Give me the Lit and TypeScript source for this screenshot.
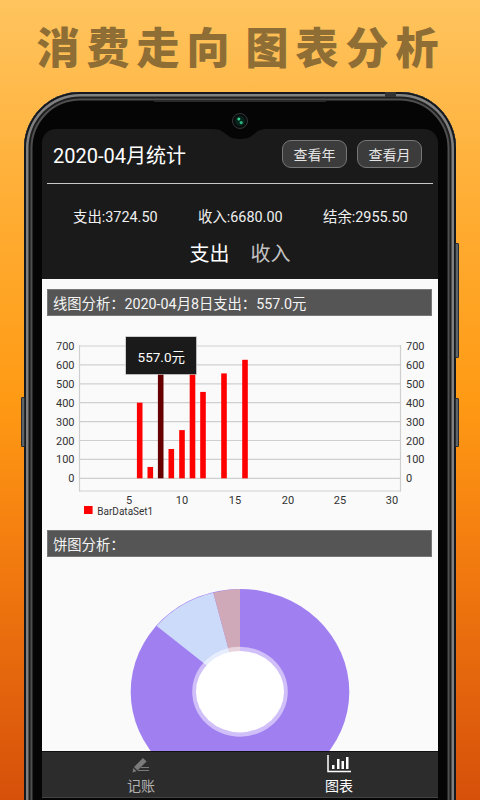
import { LitElement, html, css, svg } from "lit";
import { customElement } from "lit/decorators.js";

const Y0 = 162.3;
const YS = 132.3 / 700;
const bars: [number, number][] = [
  [139.7, 400], [150.3, 60], [160.7, 557], [171.3, 155], [182, 255],
  [192.5, 600], [203, 457], [224, 555], [245, 627],
];

@customElement("app-root")
export class AppRoot extends LitElement {
  static styles = css`
    :host {
      display: flex;
      flex-direction: column;
      align-items: center;
      width: 480px;
      height: 800px;
      overflow: hidden;
      position: relative;
      font-family: Roboto, "Noto Sans CJK SC", sans-serif;
      background: linear-gradient(180deg, #ffc45e 0%, #ffae35 25%, #ff9a14 50%, #f47e10 68%, #d6500a 100%);
    }
    .headline {
      height: 92px;
      flex: none;
      width: 480px;
      display: flex;
      justify-content: center;
      align-items: center;
      gap: 9px;
      padding-left: 2px;
      box-sizing: border-box;
      padding-bottom: 1px;
      color: #8e6e35;
      font-family: "Noto Sans CJK SC", sans-serif;
      font-weight: 900;
      font-size: 43px;
      letter-spacing: 7px;
      line-height: 1;
    }
    .phone {
      flex: none;
      position: relative;
      width: 432px;
      height: 800px;
      box-sizing: border-box;
      padding: 37px 18px 0 18px;
      border-radius: 56px;
      background: #050505;
      box-shadow:
        inset 0 0 0 2px #15191d,
        inset 0 0 0 4.5px #808080,
        inset 0 0 0 6.5px #1e1e1e,
        inset 0 0 0 8.5px #4e4e4e;
    }
    .speaker {
      position: absolute;
      top: 8px;
      left: 129px;
      width: 174px;
      height: 2px;
      background: #2a2a2a;
      border-radius: 0 0 3px 3px;
    }
    .antenna {
      position: absolute;
      top: 0;
      left: 361px;
      width: 11px;
      height: 5px;
      background: #333;
    }
    .cam {
      position: absolute;
      top: 21px;
      left: 208px;
      z-index: 2;
      display: block;
    }
    .notch {
      position: absolute;
      top: 37px;
      left: 189px;
      z-index: 1;
      display: block;
    }
    .screen {
      width: 396px;
      height: 669px;
      border-radius: 14px 14px 0 0;
      overflow: hidden;
      display: flex;
      flex-direction: column;
      background: #1a1a1a;
    }
    .top { height: 150px; flex: none; display: flex; flex-direction: column; color: #fff; }
    .titlebar {
      height: 50px;
      margin-bottom: 4px;
      flex: none;
      display: flex;
      align-items: center;
      padding: 0 16px 0 11px;
      box-sizing: border-box;
      gap: 10px;
      font-size: 20px;
    }
    .titlebar .t { flex: 1; }
    .btn {
      width: 65px;
      height: 28px;
      box-sizing: border-box;
      display: flex;
      align-items: center;
      justify-content: center;
      border: 1px solid #777;
      border-radius: 9px;
      background: #3c3c3c;
      color: #e4e4e4;
      font-size: 14px;
    }
    .rule { height: 1px; background: #c8c8c8; margin: 0 5px; flex: none; }
    .stats {
      display: grid;
      grid-template-columns: repeat(3, 125px);
      padding-left: 31px;
      margin-top: 25px;
      font-size: 14.4px;
      line-height: 18px;
      color: #f0f0f0;
    }
    .tabs {
      display: flex;
      justify-content: center;
      gap: 21px;
      margin-top: 14px;
      font-size: 20px;
      line-height: 26px;
      color: #c4c4c4;
    }
    .tabs .on { color: #fff; }
    .body { flex: 1; min-height: 0; background: #fafafa; overflow: hidden; padding: 10px 6px 0 5px; display: flex; flex-direction: column; }
    .sect {
      height: 27px;
      flex: none;
      box-sizing: border-box;
      border: 1px solid #777;
      background: #555;
      color: #f4f4f4;
      font-size: 14.3px;
      display: flex;
      align-items: center;
      padding-left: 5px;
    }
    .chart { display: block; flex: none; margin: 0 -6px 0 -5px; }
    .chart text { font-family: Roboto, "Noto Sans CJK SC", sans-serif; font-size: 11px; fill: #333; }
    .chart .legend { font-size: 10px; }
    .chart .tip { font-size: 13.5px; fill: #fff; }
    .pie { display: block; flex: none; margin: 0 -6px 0 -5px; }
    .nav {
      height: 45px;
      flex: none;
      display: flex;
      background: #2c2c2c;
      border-top: 1px solid #111;
      border-bottom: 1px solid #444;
    }
    .nav div {
      flex: 1;
      display: flex;
      flex-direction: column;
      align-items: center;
      font-size: 14px;
      line-height: 16px;
      color: #b0b0b0;
      padding-top: 3px;
    }
    .nav svg { display: block; margin-bottom: 1px; }
    .nav .on { color: #fff; }
    .key { position: absolute; width: 4px; background: #5e6468; border-radius: 1px; border: 1px solid #2a2e31; box-sizing: border-box; }
    .kr1 { right: -3px; top: 151px; height: 115px; }
    .kr2 { right: -3px; top: 306px; height: 49px; }
    .kl { left: -3px; top: 305px; height: 50px; }
  `;

  private barChart() {
    const grid = [0, 100, 200, 300, 400, 500, 600, 700];
    return html`<svg class="chart" width="396" height="214" viewBox="0 0 396 214">
      ${grid.map((v) => {
        const y = Y0 - v * YS;
        return svg`<line x1="37.5" x2="358.5" y1=${y} y2=${y} stroke="#cfcfcf" stroke-width="1.2"></line>
          <text x="32.5" y=${y + 4} text-anchor="end">${v}</text>
          <text x="364" y=${y + 4}>${v}</text>`;
      })}
      <line x1="37.5" x2="37.5" y1="29" y2="175.5" stroke="#cfcfcf" stroke-width="1.2"></line>
      <line x1="358.5" x2="358.5" y1="29" y2="175.5" stroke="#cfcfcf" stroke-width="1.2"></line>
      <line x1="37" x2="359" y1="175" y2="175" stroke="#cfcfcf" stroke-width="1.2"></line>
      ${bars.map(([x, v]) => svg`<rect x=${x - 42 - 2.8} y=${Y0 - v * YS} width="5.6" height=${v * YS} fill=${v === 557 ? "#660000" : "#ff0000"}></rect>`)}
      ${[[87, "5"], [140, "10"], [193, "15"], [246, "20"], [298, "25"], [350, "30"]].map(
        ([x, t]) => svg`<text x=${x} y="188" text-anchor="middle">${t}</text>`
      )}
      <rect x="42" y="190" width="8.6" height="8" fill="#ff0000"></rect>
      <text class="legend" x="55.3" y="198.5">BarDataSet1</text>
      <rect x="83.7" y="20.7" width="70.8" height="37.8" fill="#1a1a1a" stroke="#ddd" stroke-width="0.6"></rect>
      <text class="tip" x="119.3" y="45.5" text-anchor="middle">557.0元</text>
    </svg>`;
  }

  private pieChart() {
    const cx = 198, cy = 134.7, rx = 109.3, ry = 102.7;
    const top = `${cx} ${cy - ry}`;
    const a = `171.3 35.7`;
    const b = `114.7 69`;
    return html`<svg class="pie" width="396" height="196" viewBox="0 0 396 196">
      <ellipse cx=${cx} cy=${cy} rx=${rx} ry=${ry} fill="#a07ff0"></ellipse>
      <path d="M${cx} ${cy} L${a} A${rx} ${ry} 0 0 0 ${b} Z" fill="#cddbfb"></path>
      <path d="M${cx} ${cy} L${top} A${rx} ${ry} 0 0 0 ${a} Z" fill="#d0a9b8"></path>
      <ellipse cx=${cx} cy=${cy} rx="47.8" ry="45" fill="#ffffff" fill-opacity="0.5"></ellipse>
      <ellipse cx=${cx} cy=${cy} rx="44" ry="40.7" fill="#ffffff"></ellipse>
    </svg>`;
  }

  render() {
    return html`
      <div class="headline"><span>消费走向</span><span>图表分析</span></div>
      <div class="phone">
        <div class="key kr1"></div>
        <div class="key kr2"></div>
        <div class="key kl"></div>
        <div class="antenna"></div>
        <div class="speaker"></div>
        <svg class="notch" width="54" height="11" viewBox="0 0 54 11">
          <path d="M0 0 H54 C46 0 44 3 40 6 C36 9 32 10 27 10 C22 10 18 9 14 6 C10 3 8 0 0 0 Z" fill="#050505"></path>
        </svg>
        <svg class="cam" width="16" height="16" viewBox="0 0 16 16">
          <circle cx="8" cy="8" r="7.5" fill="#0a0c0c" stroke="#33383a" stroke-width="1"></circle>
          <circle cx="8" cy="8" r="5" fill="#06241c"></circle>
          <circle cx="6.8" cy="6" r="1.5" fill="#35d08f"></circle>
          <circle cx="9.2" cy="9.6" r="1.6" fill="#2bb57c"></circle>
        </svg>
        <div class="screen">
          <div class="top">
            <div class="titlebar">
              <span class="t">2020-04月统计</span>
              <span class="btn">查看年</span>
              <span class="btn">查看月</span>
            </div>
            <div class="rule"></div>
            <div class="stats">
              <span>支出:3724.50</span><span>收入:6680.00</span><span>结余:2955.50</span>
            </div>
            <div class="tabs"><span class="on">支出</span><span>收入</span></div>
          </div>
          <div class="body">
            <div class="sect">线图分析：2020-04月8日支出：557.0元</div>
            ${this.barChart()}
            <div class="sect">饼图分析：</div>
            ${this.pieChart()}
          </div>
          <div class="nav">
            <div>
              <svg width="24" height="22" viewBox="0 0 24 22">
                <path d="M5 12 L14 3 L17.5 6.5 L8.5 15.5 Z" fill="#7a7a7a"></path>
                <path d="M3.5 17.5 L4.3 13 L7.5 16.2 Z" fill="#7a7a7a"></path>
                <path d="M12 12.5 H20 M9 15.5 H20" stroke="#7a7a7a" stroke-width="1"></path>
              </svg>
              <span>记账</span>
            </div>
            <div class="on">
              <svg width="24" height="22" viewBox="0 0 24 22">
                <path d="M1 0 V16.5 H24" stroke="#fff" stroke-width="1.5" fill="none"></path>
                <path d="M5 10h2.5v4H5z M10 4h2.5v10H10z M14.5 6h2.5v8h-2.5z M19 2h2.5v12H19z" fill="#fff"></path>
              </svg>
              <span>图表</span>
            </div>
          </div>
        </div>
      </div>
    `;
  }
}
